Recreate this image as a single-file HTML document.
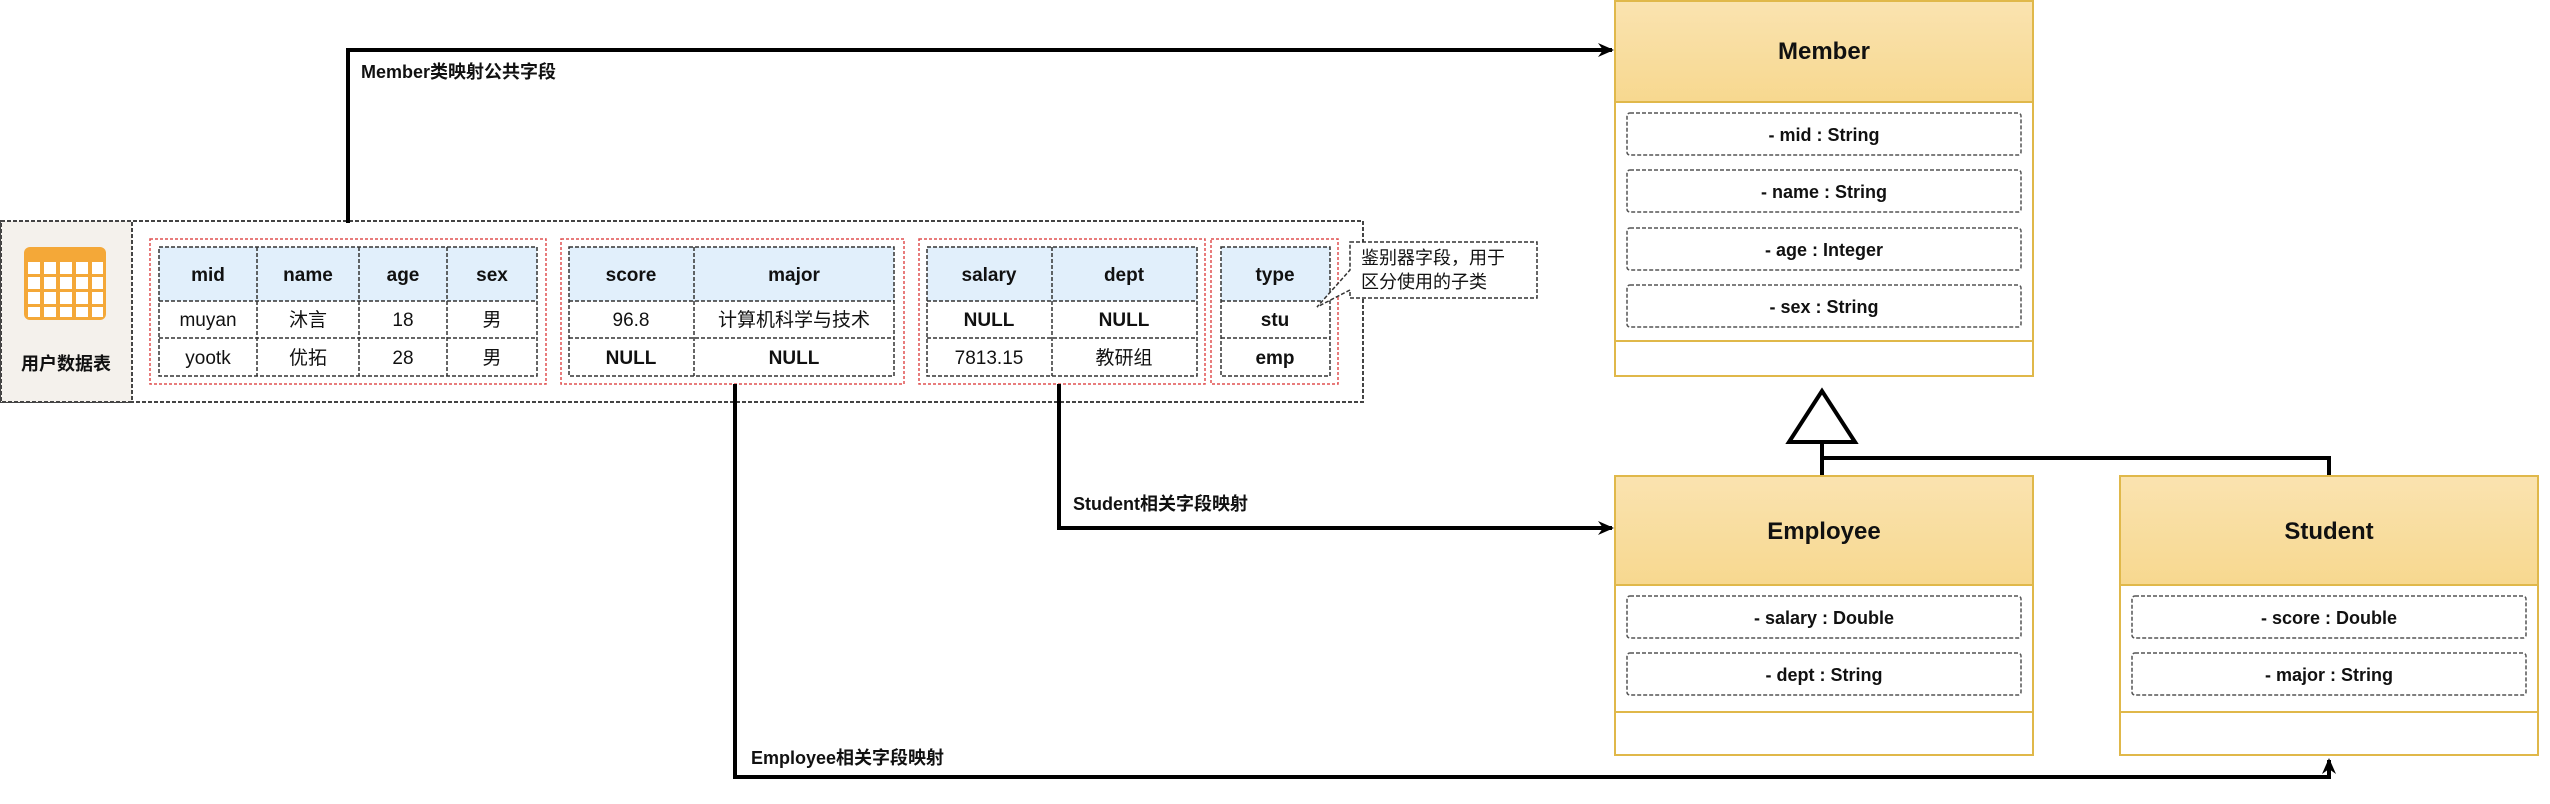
<!DOCTYPE html>
<html><head><meta charset="utf-8"><style>
html,body{margin:0;padding:0;background:#fff;width:2550px;height:804px;overflow:hidden}
text{font-family:"Liberation Sans","Noto Sans CJK SC",sans-serif;fill:#111}
.b{font-weight:bold}
</style></head><body>
<svg width="2550" height="804" viewBox="0 0 2550 804" xmlns="http://www.w3.org/2000/svg">
<defs>
<marker id="ar" markerWidth="18" markerHeight="16" refX="14" refY="8" orient="auto" markerUnits="userSpaceOnUse"><path d="M0,1 L16,8 L0,15 L5,8 z" fill="#000"/></marker>
</defs>
<rect x="1" y="221" width="1362" height="181" fill="#fff" stroke="#444" stroke-width="2" stroke-dasharray="4,2"/>
<rect x="1" y="221" width="131" height="181" fill="#f4f1ec" stroke="#444" stroke-width="2" stroke-dasharray="4,2"/>
<rect x="24" y="247" width="82" height="73" rx="6" fill="#f4a838"/>
<g fill="#fff">
<rect x="28" y="262" width="12" height="12"/><rect x="44" y="262" width="12" height="12"/><rect x="60" y="262" width="12" height="12"/><rect x="76" y="262" width="12" height="12"/><rect x="92" y="262" width="11" height="12"/>
<rect x="28" y="277" width="12" height="12"/><rect x="44" y="277" width="12" height="12"/><rect x="60" y="277" width="12" height="12"/><rect x="76" y="277" width="12" height="12"/><rect x="92" y="277" width="11" height="12"/>
<rect x="28" y="292" width="12" height="12"/><rect x="44" y="292" width="12" height="12"/><rect x="60" y="292" width="12" height="12"/><rect x="76" y="292" width="12" height="12"/><rect x="92" y="292" width="11" height="12"/>
<rect x="28" y="307" width="12" height="10"/><rect x="44" y="307" width="12" height="10"/><rect x="60" y="307" width="12" height="10"/><rect x="76" y="307" width="12" height="10"/><rect x="92" y="307" width="11" height="10"/>
</g>
<text x="66" y="370" font-size="18" text-anchor="middle" class="b">用户数据表</text>

<g fill="none" stroke="#e05050" stroke-width="1.5" stroke-dasharray="3,2">
<rect x="150" y="239" width="396" height="145"/>
<rect x="561" y="239" width="343" height="145"/>
<rect x="919" y="239" width="286" height="145"/>
<rect x="1211" y="239" width="127" height="145"/>
</g>
<g fill="#e1effb">
<rect x="159" y="247" width="378" height="54"/>
<rect x="569" y="247" width="325" height="54"/>
<rect x="927" y="247" width="270" height="54"/>
<rect x="1221" y="247" width="109" height="54"/>
</g>
<g fill="none" stroke="#333" stroke-width="1.5" stroke-dasharray="4,2">
<rect x="159" y="247" width="378" height="129"/>
<path d="M159 301H537M159 338H537M257 247V376M359 247V376M447 247V376"/>
<rect x="569" y="247" width="325" height="129"/>
<path d="M569 301H894M569 338H894M694 247V376"/>
<rect x="927" y="247" width="270" height="129"/>
<path d="M927 301H1197M927 338H1197M1052 247V376"/>
<rect x="1221" y="247" width="109" height="129"/>
<path d="M1221 301H1330M1221 338H1330"/>
</g>
<g font-size="19" text-anchor="middle">
<text class="b" x="208" y="281">mid</text><text class="b" x="308" y="281">name</text><text class="b" x="403" y="281">age</text><text class="b" x="492" y="281">sex</text>
<text x="208" y="326">muyan</text><text x="308" y="326">沐言</text><text x="403" y="326">18</text><text x="492" y="326">男</text>
<text x="208" y="364">yootk</text><text x="308" y="364">优拓</text><text x="403" y="364">28</text><text x="492" y="364">男</text>
<text class="b" x="631" y="281">score</text><text class="b" x="794" y="281">major</text>
<text x="631" y="326">96.8</text><text x="794" y="326">计算机科学与技术</text>
<text class="b" x="631" y="364">NULL</text><text class="b" x="794" y="364">NULL</text>
<text class="b" x="989" y="281">salary</text><text class="b" x="1124" y="281">dept</text>
<text class="b" x="989" y="326">NULL</text><text class="b" x="1124" y="326">NULL</text>
<text x="989" y="364">7813.15</text><text x="1124" y="364">教研组</text>
<text class="b" x="1275" y="281">type</text><text class="b" x="1275" y="326">stu</text><text class="b" x="1275" y="364">emp</text>
</g>
<path d="M1350 242H1537V298H1350V290L1317 307L1350 270Z" fill="#fff" stroke="#333" stroke-width="1.5" stroke-dasharray="4,2"/>
<text x="1361" y="264" font-size="18">鉴别器字段，用于</text>
<text x="1361" y="288" font-size="18">区分使用的子类</text>

<g fill="none" stroke="#000" stroke-width="4">
<path d="M348 223V50H1612" marker-end="url(#ar)"/>
<path d="M1059 384V528H1612" marker-end="url(#ar)"/>
<path d="M735 384V777H2329V760" marker-end="url(#ar)"/>
<path d="M1822 442V476M1822 458H2329V476"/>
</g>
<path d="M1822 391L1789 442H1855Z" fill="#fff" stroke="#000" stroke-width="4"/>
<text x="361" y="78" font-size="18" class="b">Member类映射公共字段</text>
<text x="1073" y="510" font-size="18" class="b">Student相关字段映射</text>
<text x="751" y="764" font-size="18" class="b">Employee相关字段映射</text>

<defs><linearGradient id="hg" x1="0" y1="0" x2="0" y2="1"><stop offset="0" stop-color="#fae3b0"/><stop offset="1" stop-color="#f7d88f"/></linearGradient></defs>
<g stroke="#e0b84a" stroke-width="2">
<rect x="1615" y="1" width="418" height="375" fill="#fff"/>
<rect x="1615" y="1" width="418" height="101" fill="url(#hg)"/>
<line x1="1615" y1="341" x2="2033" y2="341"/>
<rect x="1615" y="476" width="418" height="279" fill="#fff"/>
<rect x="1615" y="476" width="418" height="109" fill="url(#hg)"/>
<line x1="1615" y1="712" x2="2033" y2="712"/>
<rect x="2120" y="476" width="418" height="279" fill="#fff"/>
<rect x="2120" y="476" width="418" height="109" fill="url(#hg)"/>
<line x1="2120" y1="712" x2="2538" y2="712"/>
</g>
<g fill="none" stroke="#555" stroke-width="1.5" stroke-dasharray="4,2">
<rect x="1627" y="113" width="394" height="42" rx="3"/>
<rect x="1627" y="170" width="394" height="42" rx="3"/>
<rect x="1627" y="228" width="394" height="42" rx="3"/>
<rect x="1627" y="285" width="394" height="42" rx="3"/>
<rect x="1627" y="596" width="394" height="42" rx="3"/>
<rect x="1627" y="653" width="394" height="42" rx="3"/>
<rect x="2132" y="596" width="394" height="42" rx="3"/>
<rect x="2132" y="653" width="394" height="42" rx="3"/>
</g>
<g text-anchor="middle" class="b">
<text x="1824" y="59" font-size="24" class="b">Member</text>
<text x="1824" y="539" font-size="24" class="b">Employee</text>
<text x="2329" y="539" font-size="24" class="b">Student</text>
<g font-size="18">
<text class="b" x="1824" y="141">- mid : String</text>
<text class="b" x="1824" y="198">- name : String</text>
<text class="b" x="1824" y="256">- age : Integer</text>
<text class="b" x="1824" y="313">- sex : String</text>
<text class="b" x="1824" y="624">- salary : Double</text>
<text class="b" x="1824" y="681">- dept : String</text>
<text class="b" x="2329" y="624">- score : Double</text>
<text class="b" x="2329" y="681">- major : String</text>
</g>
</g>
</svg>
</body></html>
